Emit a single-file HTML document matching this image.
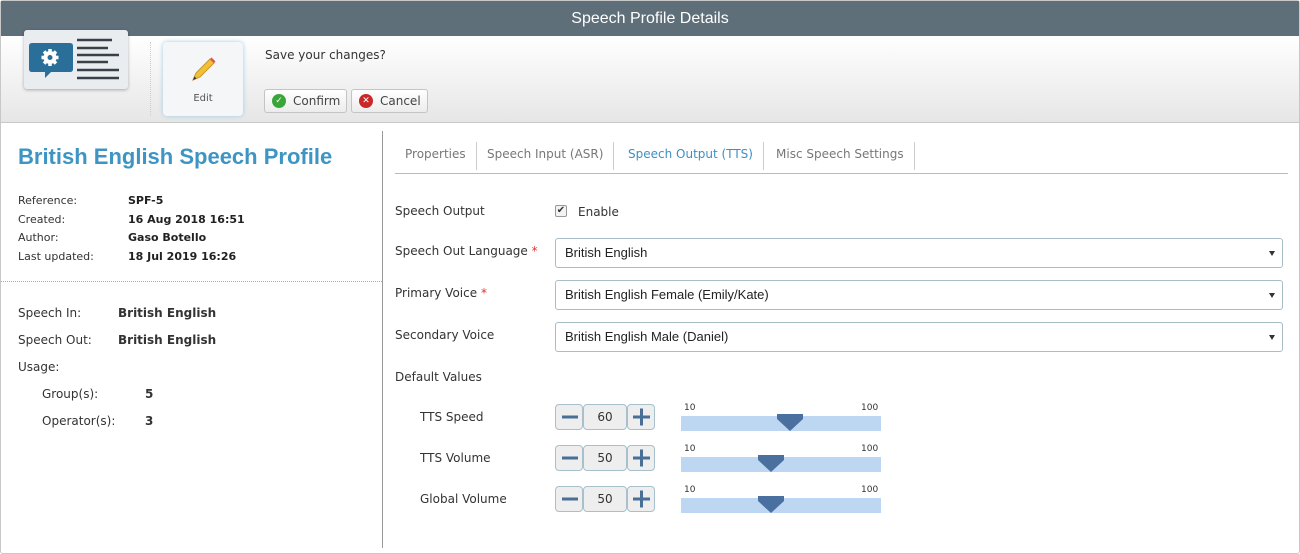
<!DOCTYPE html>
<html><head><style>
*{box-sizing:border-box;margin:0;padding:0}
body{width:1300px;height:554px;background:#fff;font-family:"DejaVu Sans",Verdana,sans-serif;font-size:12px;color:#333;position:relative;overflow:hidden}
.frame{position:absolute;left:0;top:0;width:1300px;height:554px;border:1px solid #c8c8c8;border-radius:3px}
.hdr{position:absolute;left:1px;top:1px;width:1298px;height:35px;background:#5e6f7a;color:#fff;font-family:"Liberation Sans",Arial,sans-serif;font-size:16px;text-align:center;line-height:35px}
.tb{position:absolute;left:1px;top:36px;width:1298px;height:87px;background:linear-gradient(#fff,#e6e6e6);border-bottom:1px solid #c8c8c8}
.abs{position:absolute}
.btn{position:absolute;height:24px;border:1px solid #c4c4c4;border-radius:3px;background:linear-gradient(#fff,#ececec);font-size:12px;color:#444;line-height:22px;padding-left:28px}
.ico{position:absolute;left:7px;top:4px;width:14px;height:14px;border-radius:50%;color:#fff;font-size:9px;text-align:center;line-height:14px;font-weight:bold}
.lbl{position:absolute;font-size:11px;color:#333}
.val{position:absolute;font-size:11px;font-weight:bold;color:#222}
.l2{position:absolute;font-size:12px;color:#333}
.v2{position:absolute;font-size:12px;font-weight:bold;color:#333}
.tab{position:absolute;top:142px;font-size:12px;color:#777;height:28px;border-right:1px solid #ccc;padding:5px 10px 0 10px}
.sel{position:absolute;left:555px;width:728px;height:30px;border:1px solid #a9bcc9;border-radius:3px;font-family:"Liberation Sans",Arial,sans-serif;font-size:13px;color:#222;line-height:28px;padding-left:9px}
.sel:after{content:"";position:absolute;right:7px;top:12px;border-left:3px solid transparent;border-right:3px solid transparent;border-top:5px solid #333}
.sb{position:absolute;width:28px;height:26px;border:1px solid #a8bfcc;border-radius:4px;background:#eee}
.sv{position:absolute;width:44px;height:26px;border:1px solid #a8bfcc;border-radius:4px;background:#eee;text-align:center;line-height:24px;font-size:12px;color:#333}
.track{position:absolute;left:681px;width:200px;height:15px;background:#bdd6f2}
.tk{position:absolute;font-size:9px;color:#333}
.thumb{position:absolute;width:26px;height:17px}
</style></head><body>
<div class="frame"></div>
<div class="hdr">Speech Profile Details</div>
<div class="tb"></div>
<div class="abs" style="left:24px;top:30px;width:104px;height:59px;background:#e9edf0;border-radius:3px;box-shadow:0 1px 3px rgba(0,0,0,.3)"></div>
<svg class="abs" style="left:28px;top:38px" width="94" height="44">
<path d="M1 8 Q1 5 4 5 H42 Q45 5 45 8 V31 Q45 34 42 34 H23 L17 40 V34 H4 Q1 34 1 31Z" fill="#2a6f9a"/>
<g stroke="#fff" stroke-width="3.5"><line x1="22" y1="11" x2="22" y2="28"/><line x1="13.5" y1="19.5" x2="30.5" y2="19.5"/><line x1="16" y1="13.5" x2="28" y2="25.5"/><line x1="28" y1="13.5" x2="16" y2="25.5"/></g>
<circle cx="22" cy="19.5" r="6.5" fill="#fff"/>
<circle cx="22" cy="19.5" r="2.5" fill="#2a6f9a"/>
<g stroke="#3a4048" stroke-width="2.6"><line x1="49" y1="2" x2="84" y2="2"/><line x1="49" y1="10" x2="80" y2="10"/><line x1="49" y1="17" x2="91" y2="17"/><line x1="49" y1="24" x2="80" y2="24"/><line x1="49" y1="32" x2="91" y2="32"/><line x1="49" y1="40" x2="91" y2="40"/></g>
</svg>
<div class="abs" style="left:150px;top:42px;height:74px;border-left:1px dotted #ccc"></div>
<div class="abs" style="left:163px;top:42px;width:80px;height:74px;background:#f4f6f8;border-radius:4px;box-shadow:0 0 5px #9ccde6"></div>
<svg class="abs" style="left:190px;top:57px" width="26" height="26"><path d="M3 23 L6 16 L20 2 L24 6 L10 20Z" fill="#f2c037" stroke="#c9962a" stroke-width="1"/><path d="M20 2 L24 6 L25.5 4.5 L21.5 0.5Z" fill="#e05050"/><path d="M3 23 L4.5 19.5 L6.5 21.5Z" fill="#333"/></svg>
<div class="abs" style="left:163px;top:93px;width:80px;text-align:center;font-size:10px;color:#555">Edit</div>
<div class="abs" style="left:265px;top:48px;font-size:12px;color:#333">Save your changes?</div>
<div class="btn" style="left:264px;top:89px;width:83px"><span class="ico" style="background:#3aa63a">✓</span>Confirm</div>
<div class="btn" style="left:351px;top:89px;width:77px"><span class="ico" style="background:#c82828">✕</span>Cancel</div>
<div class="abs" style="left:18px;top:144px;font-family:'Liberation Sans',Arial,sans-serif;font-weight:bold;font-size:22px;color:#3e95c4">British English Speech Profile</div>
<div class="lbl" style="left:18px;top:194px">Reference:</div><div class="val" style="left:128px;top:194px">SPF-5</div>
<div class="lbl" style="left:18px;top:213px">Created:</div><div class="val" style="left:128px;top:213px">16 Aug 2018 16:51</div>
<div class="lbl" style="left:18px;top:231px">Author:</div><div class="val" style="left:128px;top:231px">Gaso Botello</div>
<div class="lbl" style="left:18px;top:250px">Last updated:</div><div class="val" style="left:128px;top:250px">18 Jul 2019 16:26</div>
<div class="abs" style="left:1px;top:281px;width:381px;border-top:1px dotted #aaa"></div>
<div class="l2" style="left:18px;top:306px">Speech In:</div><div class="v2" style="left:118px;top:306px">British English</div>
<div class="l2" style="left:18px;top:333px">Speech Out:</div><div class="v2" style="left:118px;top:333px">British English</div>
<div class="l2" style="left:18px;top:360px">Usage:</div>
<div class="l2" style="left:42px;top:387px">Group(s):</div><div class="v2" style="left:145px;top:387px">5</div>
<div class="l2" style="left:42px;top:414px">Operator(s):</div><div class="v2" style="left:145px;top:414px">3</div>
<div class="abs" style="left:382px;top:131px;height:417px;border-left:1px solid #999"></div>
<div class="tab" style="left:395px">Properties</div>
<div class="tab" style="left:477px">Speech Input (ASR)</div>
<div class="tab" style="left:618px;color:#3e8fc0">Speech Output (TTS)</div>
<div class="tab" style="left:766px">Misc Speech Settings</div>
<div class="abs" style="left:395px;top:173px;width:893px;border-top:1px solid #bbb"></div>
<div class="l2" style="left:395px;top:204px">Speech Output</div>
<div class="abs" style="left:555px;top:205px;width:12px;height:12px;border:1px solid #999;border-radius:2px;background:#f3f3f3;font-size:10px;line-height:10px;text-align:center;color:#333">✔</div>
<div class="l2" style="left:578px;top:205px">Enable</div>
<div class="l2" style="left:395px;top:244px">Speech Out Language <span style="color:#d33">*</span></div>
<div class="sel" style="top:238px">British English</div>
<div class="l2" style="left:395px;top:286px">Primary Voice <span style="color:#d33">*</span></div>
<div class="sel" style="top:280px">British English Female (Emily/Kate)</div>
<div class="l2" style="left:395px;top:328px">Secondary Voice</div>
<div class="sel" style="top:322px">British English Male (Daniel)</div>
<div class="l2" style="left:395px;top:370px">Default Values</div>
<div class="l2" style="left:420px;top:410px">TTS Speed</div>
<div class="l2" style="left:420px;top:451px">TTS Volume</div>
<div class="l2" style="left:420px;top:492px">Global Volume</div>
<svg width="0" height="0" style="position:absolute"><defs>
<g id="m"><line x1="6" y1="12" x2="22" y2="12" stroke="#4a6f96" stroke-width="3"/></g>
<g id="p"><line x1="5" y1="12" x2="22" y2="12" stroke="#4a6f96" stroke-width="3"/><line x1="13.5" y1="3.5" x2="13.5" y2="20.5" stroke="#4a6f96" stroke-width="3"/></g>
</defs></svg>
<div class="sb" style="left:555px;top:404px"><svg width="26" height="24"><use href="#m"/></svg></div>
<div class="sv" style="left:583px;top:404px">60</div>
<div class="sb" style="left:627px;top:404px"><svg width="26" height="24"><use href="#p"/></svg></div>
<div class="sb" style="left:555px;top:445px"><svg width="26" height="24"><use href="#m"/></svg></div>
<div class="sv" style="left:583px;top:445px">50</div>
<div class="sb" style="left:627px;top:445px"><svg width="26" height="24"><use href="#p"/></svg></div>
<div class="sb" style="left:555px;top:486px"><svg width="26" height="24"><use href="#m"/></svg></div>
<div class="sv" style="left:583px;top:486px">50</div>
<div class="sb" style="left:627px;top:486px"><svg width="26" height="24"><use href="#p"/></svg></div>
<div class="tk" style="left:684px;top:403px">10</div><div class="tk" style="left:861px;top:403px">100</div>
<div class="track" style="top:416px"></div>
<svg class="thumb" style="left:777px;top:414px" viewBox="0 0 26 17"><path d="M0 0H26V5L13 17L0 5Z" fill="#4a70a0"/></svg>
<div class="tk" style="left:684px;top:444px">10</div><div class="tk" style="left:861px;top:444px">100</div>
<div class="track" style="top:457px"></div>
<svg class="thumb" style="left:758px;top:455px" viewBox="0 0 26 17"><path d="M0 0H26V5L13 17L0 5Z" fill="#4a70a0"/></svg>
<div class="tk" style="left:684px;top:485px">10</div><div class="tk" style="left:861px;top:485px">100</div>
<div class="track" style="top:498px"></div>
<svg class="thumb" style="left:758px;top:496px" viewBox="0 0 26 17"><path d="M0 0H26V5L13 17L0 5Z" fill="#4a70a0"/></svg>
</body></html>
